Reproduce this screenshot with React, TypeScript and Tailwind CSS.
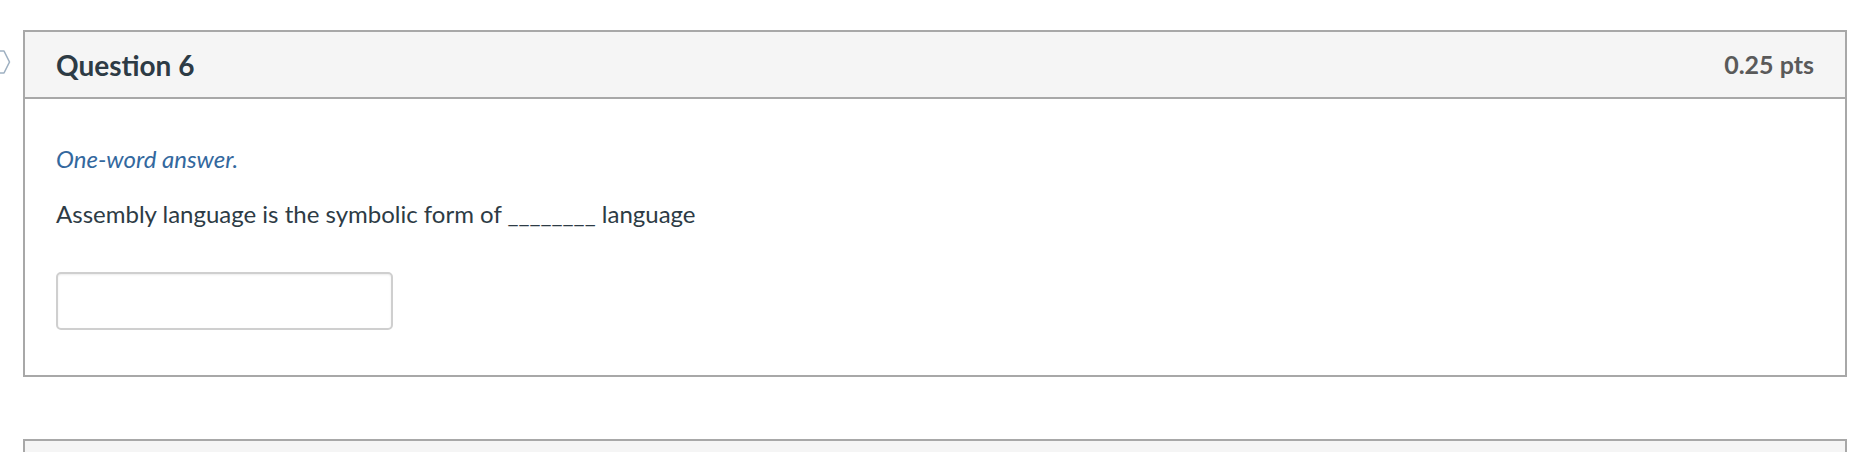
const Marker = () => (
  <svg width="23" height="26" viewBox="0 0 23 26" className="mt-[19px] shrink-0">
    <polyline
      points="-2,2 4,2 9.5,13 4,24 -2,24"
      fill="none"
      stroke="#9fb1c2"
      strokeWidth="1.6"
      strokeLinejoin="round"
    />
  </svg>
)

const QuestionCard = () => (
  <div className="flex-1 border-2 border-[#a8a8a8] bg-white">
    <div className="flex h-[67px] items-center justify-between border-b-2 border-[#a8a8a8] bg-[#f5f5f5] px-[31px]">
      <h2 className="text-[28px] font-bold text-[#2d3b45]">Question 6</h2>
      <div className="text-[25px] font-bold text-[#5a5a5a]">0.25 pts</div>
    </div>
    <div className="px-[31px] pt-[45px] pb-[45px]">
      <p className="text-[24px] leading-[29px] italic text-[#33689e]">One-word answer.</p>
      <p className="mt-[26px] text-[24px] leading-[29px] text-[#2d3b45]">
        Assembly language is the symbolic form of ________ language
      </p>
      <input
        type="text"
        className="mt-[44px] block h-[58px] w-[337px] rounded-[5px] border-2 border-[#cfcfcf] bg-white px-3 shadow-[inset_0_1px_2px_rgba(0,0,0,0.08)] outline-none"
      />
    </div>
  </div>
)

export default function App() {
  return (
    <div className="h-[452px] w-full overflow-hidden bg-white pt-[30px] pr-[5px] font-['Lato',sans-serif]">
      <div className="flex items-start">
        <Marker />
        <QuestionCard />
      </div>
      <div className="ml-[23px] mt-[62px] h-[40px] border-2 border-[#a8a8a8] bg-[#f5f5f5]" />
    </div>
  )
}
